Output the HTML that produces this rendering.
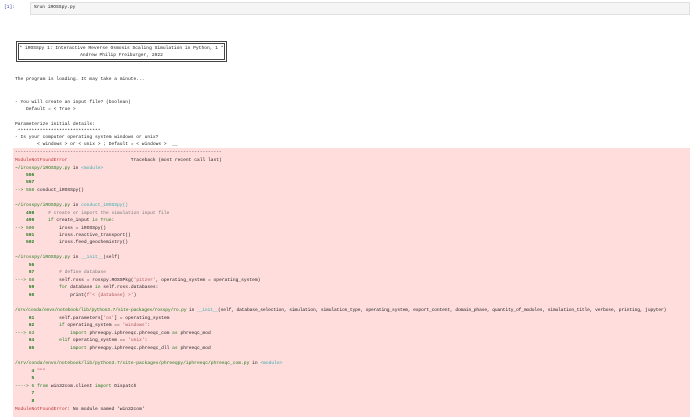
<!DOCTYPE html>
<html><head><style>
body{margin:0;width:690px;height:417px;background:#fff;overflow:hidden;position:relative;font-family:"Liberation Mono",monospace;font-size:4.6px;color:#222}
.l{position:absolute;left:15px;white-space:pre;line-height:6px}
.in{position:absolute;left:30px;top:2px;width:660px;height:13px;background:#f5f5f5;border:1px solid #e0e0e0;box-sizing:border-box}
.err{position:absolute;left:13px;top:148px;width:677px;height:269px;background:#fdd}
.box{position:absolute;left:16px;top:41px;width:211px;height:21px;border:3px double #444;box-sizing:border-box;text-align:center;line-height:6.5px;padding-top:2px;white-space:pre}
.g{color:#1a7a1a;font-weight:bold}.c{color:#3aa}.r{color:#b33}.k{color:#1a7a1a}.s{color:#a55}.gr{color:#777}
</style></head><body>
<div class="in"></div>
<div class="l" style="left:4px;top:5px;color:#303f9f">[1]:</div>
<div class="l" style="left:34px;top:5px">%run iROSSpy.py</div>
<div class="box">* iROSSpy 1: Interactive Reverse Osmosis Scaling Simulation in Python, 1 *
Andrew Philip Freiburger, 2022</div>
<div class="l" style="top:77px">The program is loading. It may take a minute...</div>
<div class="l" style="top:100px">- You will create an input file? (boolean)</div>
<div class="l" style="top:107px">    Default = &lt; True &gt;</div>
<div class="l" style="top:122px">Parameterize initial details:</div>
<div class="l" style="top:129px"> ******************************</div>
<div class="l" style="top:135px">- Is your computer operating system windows or unix?</div>
<div class="l" style="top:142px">        &lt; windows &gt; or &lt; unix &gt; ; Default = &lt; windows &gt;  __</div>
<div class="err"></div>
<div class="l" style="top:150px">---------------------------------------------------------------------------</div>
<div class="l" style="top:158px"><span class="r">ModuleNotFoundError</span>                       Traceback (most recent call last)</div>
<div class="l" style="top:166px"><span class="k">~/irosspy/iROSSpy.py</span> in <span class="c">&lt;module&gt;</span></div>
<div class="l" style="top:173px"><span class="g">    556</span></div>
<div class="l" style="top:180px"><span class="g">    557</span></div>
<div class="l" style="top:188px"><span class="k">--&gt; 558</span> conduct_iROSSpy()</div>
<div class="l" style="top:203px"><span class="k">~/irosspy/iROSSpy.py</span> in <span class="c">conduct_iROSSpy()</span></div>
<div class="l" style="top:211px"><span class="g">    498</span>     <span class="gr"># create or import the simulation input file</span></div>
<div class="l" style="top:218px"><span class="g">    499</span>     <span class="k">if</span> create_input <span class="k">is</span> <span class="k">True</span>:</div>
<div class="l" style="top:226px"><span class="k">--&gt; 500</span>         iross = iROSSpy()</div>
<div class="l" style="top:233px"><span class="g">    501</span>         iross.reactive_transport()</div>
<div class="l" style="top:240px"><span class="g">    502</span>         iross.feed_geochemistry()</div>
<div class="l" style="top:255px"><span class="k">~/irosspy/iROSSpy.py</span> in <span class="c">__init__</span>(self)</div>
<div class="l" style="top:263px"><span class="g">     56</span></div>
<div class="l" style="top:270px"><span class="g">     57</span>         <span class="gr"># define database</span></div>
<div class="l" style="top:278px"><span class="k">---&gt; 58</span>         self.ross = rosspy.ROSSPkg(<span class="s">'pitzer'</span>, operating_system = operating_system)</div>
<div class="l" style="top:285px"><span class="g">     59</span>         <span class="k">for</span> database <span class="k">in</span> self.ross.databases:</div>
<div class="l" style="top:293px"><span class="g">     60</span>             print(<span class="s">f'&lt; {database} &gt;'</span>)</div>
<div class="l" style="top:308px;letter-spacing:-0.12px"><span class="k">/srv/conda/envs/notebook/lib/python3.7/site-packages/rosspy/ro.py</span> in <span class="c">__init__</span>(self, database_selection, simulation, simulation_type, operating_system, export_content, domain_phase, quantity_of_modules, simulation_title, verbose, printing, jupyter)</div>
<div class="l" style="top:316px"><span class="g">     61</span>         self.parameters[<span class="s">'os'</span>] = operating_system</div>
<div class="l" style="top:323px"><span class="g">     62</span>         <span class="k">if</span> operating_system == <span class="s">'windows'</span>:</div>
<div class="l" style="top:331px"><span class="k">---&gt; 63</span>             <span class="k">import</span> phreeqpy.iphreeqc.phreeqc_com <span class="k">as</span> phreeqc_mod</div>
<div class="l" style="top:338px"><span class="g">     64</span>         <span class="k">elif</span> operating_system == <span class="s">'unix'</span>:</div>
<div class="l" style="top:346px"><span class="g">     65</span>             <span class="k">import</span> phreeqpy.iphreeqc.phreeqc_dll <span class="k">as</span> phreeqc_mod</div>
<div class="l" style="top:361px"><span class="k">/srv/conda/envs/notebook/lib/python3.7/site-packages/phreeqpy/iphreeqc/phreeqc_com.py</span> in <span class="c">&lt;module&gt;</span></div>
<div class="l" style="top:369px"><span class="g">      4</span> <span class="s">"""</span></div>
<div class="l" style="top:376px"><span class="g">      5</span></div>
<div class="l" style="top:384px"><span class="k">----&gt; 6</span> <span class="k">from</span> win32com.client <span class="k">import</span> Dispatch</div>
<div class="l" style="top:391px"><span class="g">      7</span></div>
<div class="l" style="top:399px"><span class="g">      8</span></div>
<div class="l" style="top:407px"><span class="r">ModuleNotFoundError</span>: No module named 'win32com'</div>
</body></html>
